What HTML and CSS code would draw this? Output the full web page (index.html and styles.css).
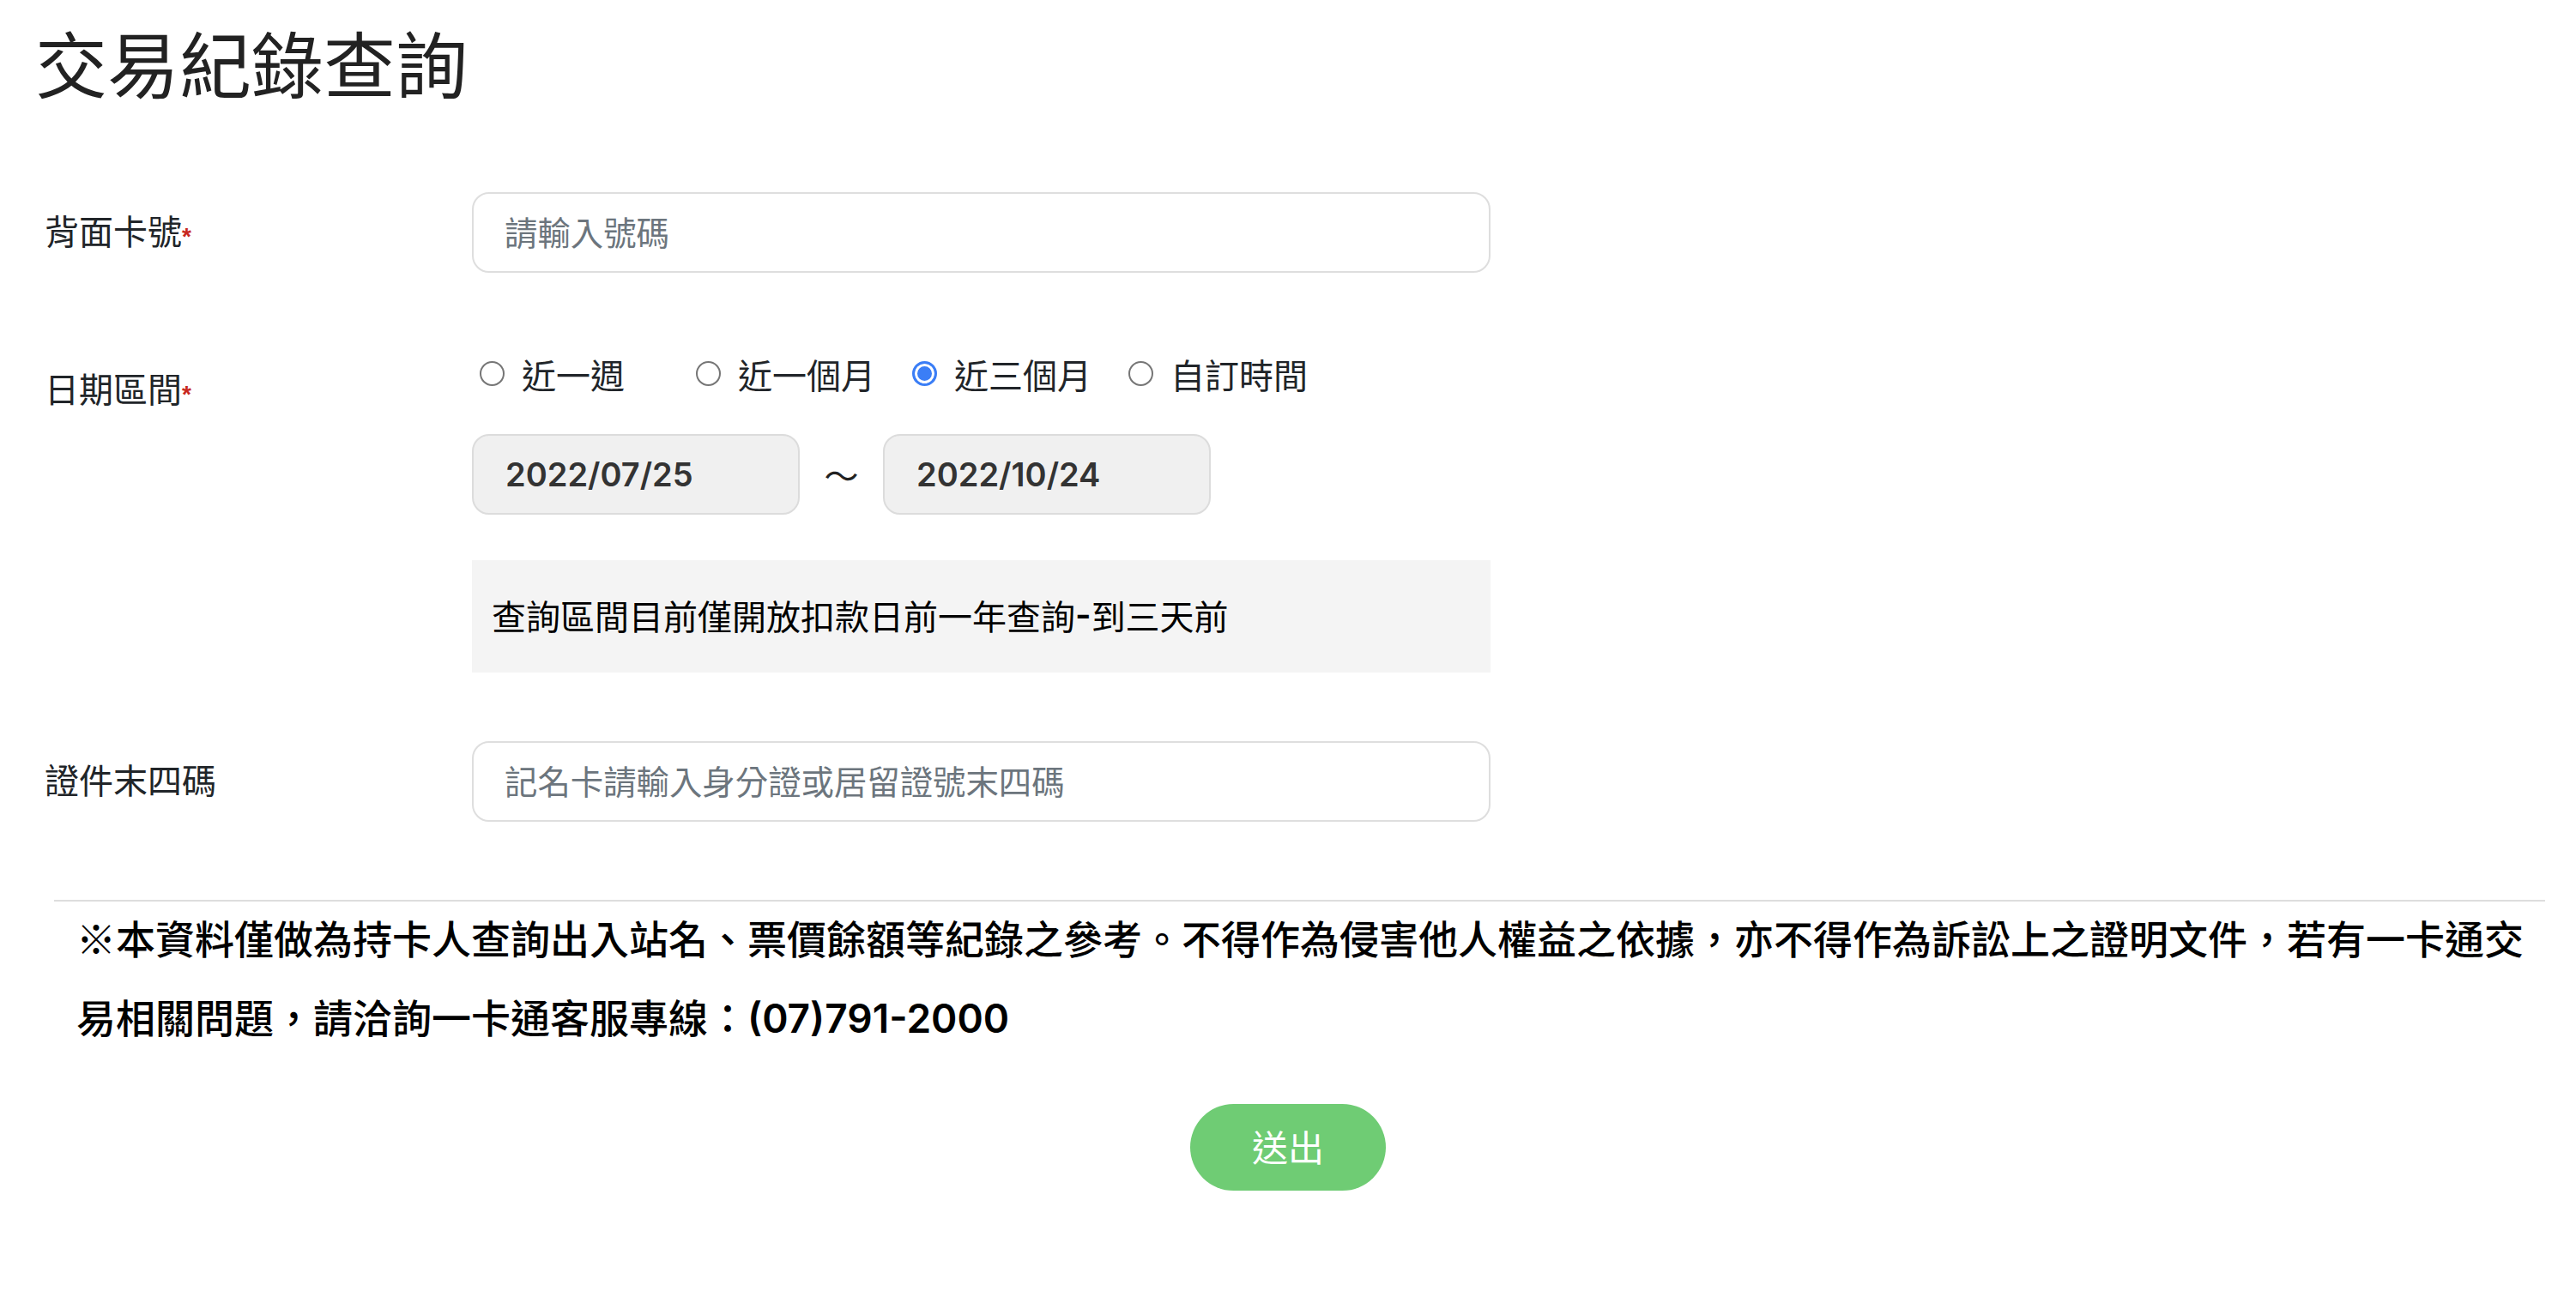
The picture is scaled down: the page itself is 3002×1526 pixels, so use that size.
FILE: index.html
```html
<!DOCTYPE html>
<html lang="zh-Hant">
<head>
<meta charset="utf-8">
<title>交易紀錄查詢</title>
<link rel="stylesheet" href="styles.css">
</head>
<body>
<div class="page">
  <h1 class="title">交易紀錄查詢</h1>
  <form class="form">
    <div class="row row-card">
      <label class="label">背面卡號<span class="req">*</span></label>
      <div class="field">
        <input class="text-input" type="text" placeholder="請輸入號碼">
      </div>
    </div>
    <div class="row row-date">
      <label class="label">日期區間<span class="req">*</span></label>
      <div class="field">
        <div class="radios">
          <label class="radio-item"><input class="radio" type="radio" name="range"><span class="radio-text">近一週</span></label>
          <label class="radio-item"><input class="radio" type="radio" name="range"><span class="radio-text">近一個月</span></label>
          <label class="radio-item"><input class="radio" type="radio" name="range" checked><span class="radio-text">近三個月</span></label>
          <label class="radio-item"><input class="radio" type="radio" name="range"><span class="radio-text">自訂時間</span></label>
        </div>
        <div class="dates">
          <div class="date-box">2022/07/25</div>
          <span class="tilde">～</span>
          <div class="date-box">2022/10/24</div>
        </div>
        <div class="notice">查詢區間目前僅開放扣款日前一年查詢<span class="latin">-</span>到三天前</div>
      </div>
    </div>
    <div class="row row-id">
      <label class="label">證件末四碼</label>
      <div class="field">
        <input class="text-input" type="text" placeholder="記名卡請輸入身分證或居留證號末四碼">
      </div>
    </div>
  </form>
  <div class="disclaimer">
    <p class="disclaimer-text">※本資料僅做為持卡人查詢出入站名、票價餘額等紀錄之參考。不得作為侵害他人權益之依據，亦不得作為訴訟上之證明文件，若有一卡通交易相關問題，請洽詢一卡通客服專線：<span class="phone">(07)791-2000</span></p>
  </div>
  <div class="actions">
    <button class="submit" type="button">送出</button>
  </div>
</div>
</body>
</html>
```

FILE: styles.css
```css
* {
  box-sizing: border-box;
}

html, body {
  margin: 0;
  padding: 0;
  background: #ffffff;
}

body {
  font-family: "Noto Sans CJK TC", "Noto Sans CJK SC", sans-serif;
  color: #212529;
}

.page {
  padding-top: 22px;
  padding-bottom: 80px;
}

.title {
  margin: 0 0 0 41px;
  font-size: 84px;
  line-height: 100.8px;
  font-weight: 400;
  color: #222222;
}

.form {
  margin: 101px 0 0 52px;
}

.row {
  display: grid;
  grid-template-columns: 498px 1187px;
  align-items: start;
}

.row-date {
  margin-top: 90px;
}

.row-id {
  margin-top: 80px;
}

.label {
  font-size: 40px;
  line-height: 88px;
  height: 94px;
  color: #212529;
  white-space: nowrap;
}

.req {
  font-family: "Liberation Sans", Arial, sans-serif;
  font-size: 28px;
  color: #c8281e;
  font-weight: 700;
}

.field {
  display: flex;
  flex-direction: column;
}

.text-input {
  display: block;
  width: 100%;
  height: 94px;
  border: 2px solid #dedede;
  border-radius: 20px;
  padding: 0 36px 4px;
  font-family: "Noto Sans CJK TC", "Noto Sans CJK SC", sans-serif;
  font-size: 38.4px;
  color: #212529;
  background: #ffffff;
  outline: none;
}

.text-input::placeholder {
  color: #6c757d;
}

.radios {
  display: flex;
  height: 56px;
  align-items: center;
}

.radio-item {
  display: flex;
  align-items: center;
  width: 252px;
  height: 56px;
  font-size: 40px;
  line-height: 52px;
  color: #212529;
}

.radio {
  appearance: none;
  -webkit-appearance: none;
  margin: 0 20px 0 9px;
  width: 29px;
  height: 29px;
  border: 2px solid #767676;
  border-radius: 50%;
  background: #ffffff;
  flex: none;
}

.radio:checked {
  border: 3px solid #3b7ef6;
  background: #3b7ef6;
  box-shadow: inset 0 0 0 3px #ffffff;
}

.radio-text {
  white-space: nowrap;
}

.dates {
  display: flex;
  align-items: center;
  margin-top: 42px;
}

.date-box {
  width: 382px;
  height: 94px;
  border: 2px solid #dcdcdc;
  border-radius: 20px;
  background: #f0f0f0;
  padding-left: 37px;
  font-family: "Inter", "Noto Sans CJK TC", sans-serif;
  font-weight: 600;
  font-size: 38px;
  line-height: 90px;
  color: #333333;
}

.tilde {
  width: 97px;
  text-align: center;
  font-size: 40px;
  line-height: 94px;
  color: #222222;
}

.notice {
  margin-top: 53px;
  height: 131px;
  display: flex;
  align-items: center;
  padding: 0 0 3px 23px;
  background: #f4f4f4;
  font-size: 40px;
  font-weight: 400;
  color: #000000;
}

.latin {
  font-family: "Inter", sans-serif;
  font-weight: 600;
}

.disclaimer {
  margin: 91px 36px 0 63px;
  border-top: 2px solid #dddddd;
  padding: 0 20px 0 26px;
}

.disclaimer-text {
  margin: -5px 0 0;
  font-size: 46px;
  line-height: 92px;
  font-weight: 500;
  color: #000000;
}

.phone {
  font-family: "Inter", sans-serif;
  font-weight: 600;
  line-height: 1;
}

.actions {
  display: flex;
  justify-content: center;
  margin-top: 57px;
}

.submit {
  width: 228px;
  height: 101px;
  border: none;
  border-radius: 51px;
  background: #6fcc74;
  color: #ffffff;
  font-family: "Noto Sans CJK TC", "Noto Sans CJK SC", sans-serif;
  font-size: 42px;
  font-weight: 400;
  padding: 0 0 4px;
  cursor: pointer;
}
```
